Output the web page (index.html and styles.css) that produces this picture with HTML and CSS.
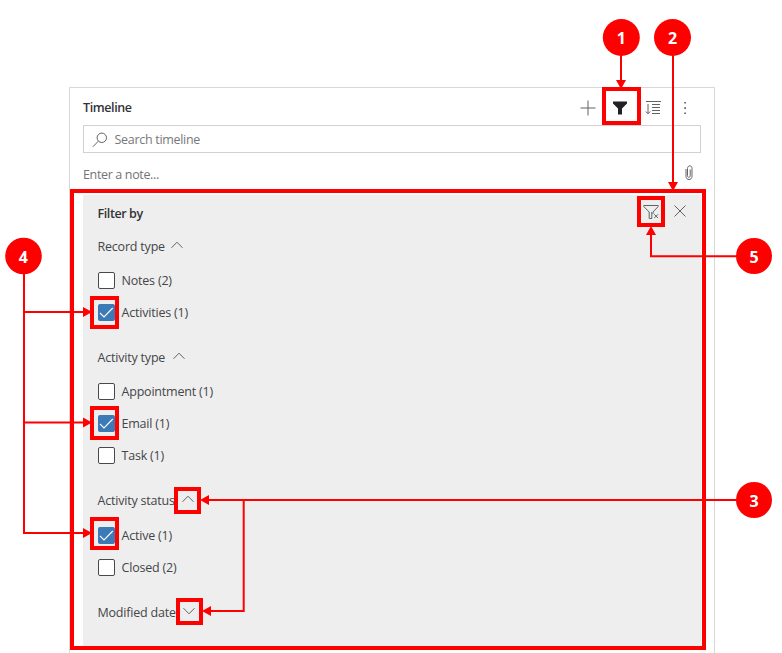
FILE: index.html
```
<!DOCTYPE html>
<html lang="en">
<head>
<meta charset="utf-8">
<title>Timeline</title>
<link rel="stylesheet" href="styles.css">
</head>
<body>
<main class="card">
  <header class="header">
    <h1 class="title">Timeline</h1>
    <div class="actions">
      <svg width="16" height="16" viewBox="0 0 16 16" class="icon"><path d="M8 .5v15M.5 8h15"/></svg>
      <svg width="16" height="16" viewBox="0 0 16 16" class="solid"><path d="M1 1.500h14v2L10 8.500v6H6v-6L1 3.500z"/></svg>
      <svg width="16" height="16" viewBox="0 0 16 16" class="icon"><path d="M1 1.500h15M7 4.500h8M7 7.500h8M7 10.500h8M7 13.500h8M3 4v9.500M.8 11.500L3 13.800l2.200-2.300"/></svg>
      <svg width="16" height="16" viewBox="0 0 16 16" class="solid dots"><path d="M7.300 2h1.600v1.600H7.300zM7.300 7.300h1.600v1.600H7.300zM7.300 12.500h1.600v1.600H7.300z"/></svg>
    </div>
  </header>
  <div class="search">
    <svg width="16" height="16" viewBox="0 0 16 16" class="icon"><circle cx="9.800" cy="5.800" r="4.700"/><path d="M6.400 9.200L.8 14.800"/></svg>
    <span class="search-text">Search timeline</span>
  </div>
  <div class="note">
    <span class="note-text">Enter a note...</span>
    <svg width="10" height="16" viewBox="0 0 10 16" class="icon clip"><path d="M2 4v7.300c0 4.300 6 4.300 6 0V3.500c0-3.800-4.500-3.300-4.500 0v7.200c0 2.200 2.700 2.200 2.700 0V4.500"/></svg>
  </div>
  <section class="panel">
    <div class="panel-head">
      <h2 class="title filter-title">Filter by</h2>
      <div class="panel-actions">
        <svg width="16" height="16" viewBox="0 0 16 16" class="icon"><path d="M.8 1.500h14.400v1L10 8v2M.8 1.500v1L6.200 8v6.500h2.600V8M11.300 10.300l3.700 3.700M15 10.300L11.300 14"/></svg>
        <svg width="14" height="14" viewBox="0 0 14 14" class="icon"><path d="M1.500 1.500l11 11M12.500 1.500l-11 11"/></svg>
      </div>
    </div>
    <div class="group g-record"><span class="w-record">Record type</span><svg width="12" height="8" viewBox="0 0 12 8" class="icon"><path d="M.5 6.800L6 1.200l5.500 5.600"/></svg></div>
    <div class="option"><i class="box"></i><span>Notes (2)</span></div>
    <div class="option"><i class="box checked"><svg width="17" height="17" viewBox="0 0 17 17"><path d="M2 9l4 4 8.800-9"/></svg></i><span>Activities (1)</span></div>
    <div class="group g-type"><span class="w-type">Activity type</span><svg width="12" height="8" viewBox="0 0 12 8" class="icon"><path d="M.5 6.800L6 1.200l5.500 5.600"/></svg></div>
    <div class="option"><i class="box"></i><span>Appointment (1)</span></div>
    <div class="option"><i class="box checked"><svg width="17" height="17" viewBox="0 0 17 17"><path d="M2 9l4 4 8.800-9"/></svg></i><span>Email (1)</span></div>
    <div class="option"><i class="box"></i><span>Task (1)</span></div>
    <div class="group g-status"><span class="w-status">Activity status</span><svg width="12" height="8" viewBox="0 0 12 8" class="icon"><path d="M.5 6.800L6 1.200l5.500 5.600"/></svg></div>
    <div class="option"><i class="box checked"><svg width="17" height="17" viewBox="0 0 17 17"><path d="M2 9l4 4 8.800-9"/></svg></i><span>Active (1)</span></div>
    <div class="option"><i class="box"></i><span>Closed (2)</span></div>
    <div class="group g-date"><span class="w-date">Modified date</span><svg width="12" height="8" viewBox="0 0 12 8" class="icon"><path d="M.5 1.200L6 6.800l5.500-5.600"/></svg></div>
  </section>
</main>
<svg class="callouts" width="782" height="653" viewBox="0 0 782 653">
  <g class="frames">
    <path d="M72 191h632v457H72z"/>
    <path d="M604 89h35v34h-35z"/>
    <path d="M639 198h24v27h-24z"/>
    <path d="M92 298h25v29H92zM92 408h25v30H92zM92 519h25v29H92z"/>
    <path d="M176 489h23v23h-23zM178 600h23v23h-23z"/>
  </g>
  <path class="lines" d="M621 50v32M673 50v134M740 256.300H651V233M740 500H207M243.700 500v111H209M24 270v263h61M24 312h61M24 422.500h61"/>
  <path class="solid-red" d="M621 89l-5-9h10zM673 191l-5-9h10zM651 226l-5 9h10zM200 500l9-5v10zM202 611l9-5v10zM92 312l-9-5v10zM92 422.500l-9-5v10zM92 533l-9-5v10z"/>
  <g class="solid-red">
    <circle cx="621.300" cy="37.500" r="18.500"/><circle cx="672.500" cy="37.500" r="18.500"/>
    <circle cx="754" cy="500" r="18"/><circle cx="23.500" cy="256" r="18.300"/><circle cx="754" cy="256" r="18"/>
  </g>
  <g class="numbers">
    <text x="621.300" y="44">1</text><text x="672.500" y="43.500">2</text><text x="754" y="507">3</text><text x="23.300" y="263">4</text><text x="754" y="263">5</text>
  </g>
</svg>
</body>
</html>
```
FILE: styles.css
```
* { box-sizing: border-box; }
body {
  margin: 0;
  height: 653px;
  padding: 87px 67px 0 69px;
  overflow: hidden;
  background: #fff;
  color: #454549;
  font: 12.5px/20px "Open Sans", "Noto Sans", sans-serif;
  letter-spacing: -.2px;
}
.card {
  height: 580px;
  padding: 0 13px;
  border: 1px solid #d8d8d8;
}
.header { display: flex; align-items: center; justify-content: space-between; height: 37px; padding-top: 3px; }
.title { margin: 0; font-size: 12.5px; font-weight: 600; letter-spacing: -.4px; color: #333337; }
.actions { display: flex; gap: 16.500px; padding-right: 8px; }
svg { display: block; flex: none; }
.icon { fill: none; stroke: #626266; stroke-width: 1; }
.solid { fill: #202126; }
.dots { fill: #55565a; }
.search {
  display: flex;
  align-items: center;
  gap: 6.500px;
  height: 28px;
  padding: 1px 0 0 8px;
  border: 1px solid #d2d2d2;
  color: #77777b;
  letter-spacing: -.3px;
}
.note { display: flex; justify-content: space-between; height: 42px; padding: 12px 7px 0 0; color: #737377; letter-spacing: -.35px; }
.panel { height: 451px; padding: 9px 14px 0 14.500px; background: #eee; }
.panel-head { display: flex; justify-content: space-between; height: 33px; }
.panel-actions { display: flex; gap: 14px; }
.group { display: flex; height: 20px; gap: 6px; }
.group span { flex: none; white-space: nowrap; }
.group svg { margin-top: 4px; }
.g-record { margin-bottom: 8px; }
.g-type { margin: 19px 0 8px; }
.g-status { margin: 19px 0 9px; }
.g-date { margin-top: 19px; }
.w-record { width: 67px; }
.w-type { width: 69px; }
.w-status { width: 78px; }
.w-date { width: 79px; }
.option { display: flex; align-items: center; height: 32px; gap: 7px; }
.box { flex: none; width: 17px; height: 17px; margin-bottom: 2px; border: 1px solid #49494d; border-radius: 2px; background: #fff; }
.checked { border: 0; background: #3b79b7; }
.checked path { fill: none; stroke: #fff; stroke-width: 1.100; }
.callouts { position: absolute; left: 0; top: 0; }
.frames { fill: none; stroke: #f00; stroke-width: 4; }
.lines { fill: none; stroke: #f00; stroke-width: 2; }
.solid-red { fill: #f00; }
.numbers { fill: #fff; font-size: 16px; font-weight: 700; letter-spacing: 0; text-anchor: middle; }
```
